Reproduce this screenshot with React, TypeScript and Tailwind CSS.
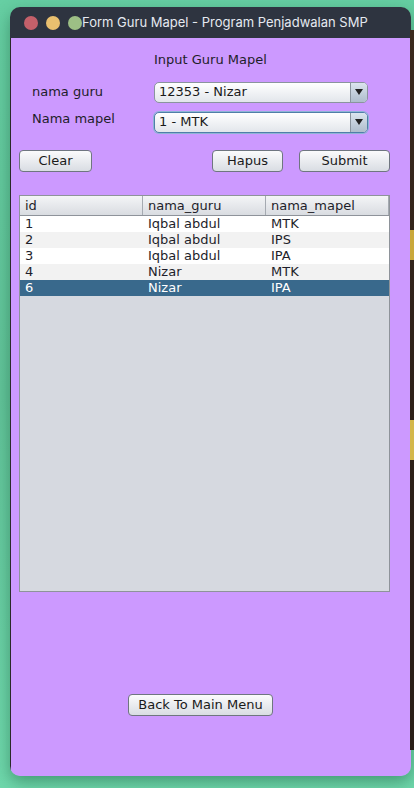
const rows = [
  { id: "1", guru: "Iqbal abdul", mapel: "MTK" },
  { id: "2", guru: "Iqbal abdul", mapel: "IPS" },
  { id: "3", guru: "Iqbal abdul", mapel: "IPA" },
  { id: "4", guru: "Nizar", mapel: "MTK" },
  { id: "6", guru: "Nizar", mapel: "IPA" },
];

const font = "font-['DejaVu_Sans',sans-serif]";

function Combo({ value, focused }: { value: string; focused?: boolean }) {
  return (
    <div
      className={`flex h-[21px] w-[214px] overflow-hidden rounded-[5px] border bg-gradient-to-b from-white to-[#e2e6eb] ${
        focused ? "border-[#4f7fa8] shadow-[0_0_0_1px_#8fb4d6]" : "border-[#8a949e]"
      }`}
    >
      <div className="flex flex-1 items-center pl-[4px] text-[13px] text-[#1a1a1a]">{value}</div>
      <div className="flex w-[17px] items-center justify-center border-l border-[#8a949e] bg-gradient-to-b from-[#dbe4ee] to-[#aebdcc]">
        <div className="h-0 w-0 border-x-[4px] border-t-[6px] border-x-transparent border-t-[#222]" />
      </div>
    </div>
  );
}

function Btn({ label, w }: { label: string; w: string }) {
  return (
    <button
      className={`flex h-[22px] ${w} items-center justify-center rounded-[4px] border border-[#6f7680] bg-gradient-to-b from-[#fbfbfc] to-[#d9dde3] text-[13px] text-[#1a1a1a]`}
    >
      {label}
    </button>
  );
}

export default function App() {
  return (
    <div className={`relative h-[788px] w-[414px] overflow-hidden bg-gradient-to-b from-[#66cfa3] via-[#62c49a] to-[#6fd8ac] ${font}`}>
      <div className="absolute right-0 top-[30px] h-[720px] w-[4px] bg-gradient-to-b from-[#3b2a1e] via-[#2e2118] to-[#2a2018]" />
      <div className="absolute right-0 top-[230px] h-[30px] w-[4px] bg-[#c9a83a]" />
      <div className="absolute right-0 top-[420px] h-[40px] w-[4px] bg-[#d4b84a]" />
      <div className="ml-[10px] mt-[7px] flex h-[769px] w-[401px] flex-col overflow-hidden rounded-[10px] shadow-[0_6px_16px_rgba(20,80,50,0.45)]">
        <div className="flex h-[31px] items-center bg-[#2e3440] pl-[14px]">
          <div className="h-[14px] w-[14px] rounded-full bg-[#c4606a]" />
          <div className="ml-[8px] h-[14px] w-[14px] rounded-full bg-[#e9c06f]" />
          <div className="ml-[8px] h-[14px] w-[14px] rounded-full bg-[#9dbf85]" />
          <span className="font-['Inter',sans-serif] text-[13px] text-[#e5e9f0]">Form Guru Mapel - Program Penjadwalan SMP</span>
        </div>
        <div className="flex flex-1 flex-col border-l border-[#2a2a2a] bg-[#cc99ff] text-[#1e1e2a]">
          <div className="mt-[12px] pl-[143px] text-[13px]">Input Guru Mapel</div>
          <div className="mt-[12px] flex items-center pl-[21px]">
            <span className="w-[122px] text-[13px]">nama guru</span>
            <Combo value="12353 - Nizar" />
          </div>
          <div className="mt-[9px] flex pl-[21px]">
            <span className="mt-[-3px] w-[122px] text-[13px]">Nama mapel</span>
            <Combo value="1 - MTK" focused />
          </div>
          <div className="mt-[17px] flex pl-[8px]">
            <Btn label="Clear" w="w-[73px]" />
            <div className="ml-[120px]">
              <Btn label="Hapus" w="w-[71px]" />
            </div>
            <div className="ml-[16px]">
              <Btn label="Submit" w="w-[91px]" />
            </div>
          </div>
          <div className="ml-[8px] mt-[23px] flex h-[397px] w-[371px] flex-col border border-[#8e939a] bg-[#d6d9e0]">
            <div className="grid h-[20px] grid-cols-[123px_123px_1fr] border-b border-[#8e939a] bg-gradient-to-b from-[#f4f5f7] to-[#d9dce1] text-[13px]">
              <div className="border-r border-[#a5aab1] pl-[5px] leading-[19px]">id</div>
              <div className="border-r border-[#a5aab1] pl-[5px] leading-[19px]">nama_guru</div>
              <div className="border-r border-[#a5aab1] pl-[5px] leading-[19px]">nama_mapel</div>
            </div>
            {rows.map((r, i) => {
              const sel = i === rows.length - 1;
              const bg = sel ? "bg-[#39698c] text-white" : i % 2 === 0 ? "bg-white" : "bg-[#f2f2f2]";
              return (
                <div key={r.id} className={`grid h-[16px] grid-cols-[123px_123px_1fr] text-[13px] leading-[16px] ${bg}`}>
                  <div className="pl-[5px]">{r.id}</div>
                  <div className="pl-[5px]">{r.guru}</div>
                  <div className="pl-[5px]">{r.mapel}</div>
                </div>
              );
            })}
          </div>
          <div className="mt-[102px] pl-[117px]">
            <Btn label="Back To Main Menu" w="w-[145px]" />
          </div>
        </div>
      </div>
    </div>
  );
}
